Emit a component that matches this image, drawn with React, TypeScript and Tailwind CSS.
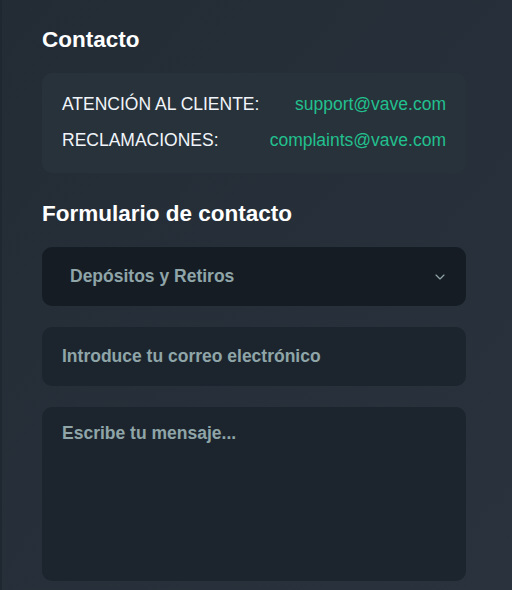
import { ChevronDown } from "lucide-react";

const font = { fontFamily: '"Liberation Sans", Arial, sans-serif' };

export default function App() {
  return (
    <div
      style={font}
      className="min-h-[590px] w-full border-l-2 border-[#1f2830] bg-gradient-to-br from-[#232c35] to-[#2a333d] pl-10 pr-[46px] pt-7 pb-2"
    >
      {/* Contact info */}
      <h2 className="text-[22.5px] font-bold leading-6 text-white">Contacto</h2>
      <div className="mt-[21px] flex flex-col gap-4 rounded-[10px] bg-[#28323b] px-5 pt-[21px] pb-[23px] text-[17.5px] leading-5">
        <div className="flex items-center justify-between">
          <span className="text-[#f1f5f9]">ATENCIÓN AL CLIENTE:</span>
          <span className="text-[#22c08e]">support@vave.com</span>
        </div>
        <div className="flex items-center justify-between">
          <span className="text-[#f1f5f9]">RECLAMACIONES:</span>
          <span className="text-[#22c08e]">complaints@vave.com</span>
        </div>
      </div>

      {/* Form */}
      <h2 className="mt-[29px] text-[22.5px] font-bold leading-6 text-white">Formulario de contacto</h2>
      <div className="mt-[21px] flex flex-col gap-[21px]">
        <div className="flex h-[59px] items-center justify-between rounded-[10px] bg-[#151c24] pl-7 pr-[18px]">
          <span className="text-[17.5px] font-bold text-[#8fa5a8]">Depósitos y Retiros</span>
          <ChevronDown size={16} strokeWidth={1.75} className="text-[#8fa5a8]" />
        </div>
        <div className="flex h-[59px] items-center rounded-[10px] bg-[#1c252e] px-5">
          <span className="text-[17.5px] font-bold text-[#8fa5a8]">Introduce tu correo electrónico</span>
        </div>
        <div className="h-[174px] rounded-[10px] bg-[#1c252e] px-5 pt-[13px]">
          <span className="text-[17.5px] font-bold text-[#8fa5a8]">Escribe tu mensaje...</span>
        </div>
      </div>
    </div>
  );
}
